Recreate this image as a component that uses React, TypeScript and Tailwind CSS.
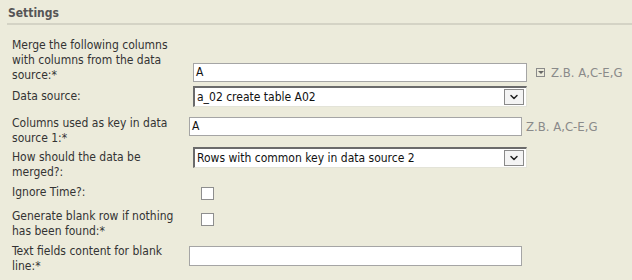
import { ChevronDown } from 'lucide-react';

function TextBox({ value, w, h = 'h-[19px]' }: { value?: string; w: string; h?: string }) {
  return (
    <div className={`${w} ${h} bg-white border border-[#a5a5a5] px-[2px] text-[12px] leading-[17px] text-[#111]`}>
      {value}
    </div>
  );
}

function Select({ value }: { value: string }) {
  return (
    <div className="w-[334px] h-[21px] flex items-stretch bg-white border-t-2 border-l-2 border-[#6b6b6b] border-b border-r border-b-[#e3e3d8] border-r-[#e3e3d8]">
      <div className="flex-1 px-[2px] text-[12px] leading-[18px] text-[#111]">{value}</div>
      <div className="w-[20px] my-[1px] mr-[2px] border border-[#8a8a8a] bg-[#f4f4f4] flex items-center justify-center">
        <ChevronDown className="w-[12px] h-[12px] text-[#222]" strokeWidth={3} />
      </div>
    </div>
  );
}

function Checkbox() {
  return <div className="w-[13px] h-[13px] bg-white border border-[#8e8e8e]" />;
}

function Hint({ children }: { children: string }) {
  return <span className="text-[13px] text-[#8a8a8a]">{children}</span>;
}

export default function App() {
  return (
    <div className="w-[632px] h-[280px] bg-[#ecebdb] text-[#333] overflow-hidden font-['DejaVu_Sans_Condensed','DejaVu_Sans',sans-serif]">
      <div className="pl-[8px] pt-[4px] h-[23px] text-[12px] font-bold text-[#555]">Settings</div>
      <div className="ml-[7px] h-[2px] bg-[#d4d3c5]" />

      <div className="pl-[12px] pt-[13px] text-[12px] leading-[15px]">
        {/* merge columns */}
        <div className="flex h-[48px]">
          <div className="w-[177px]">
            Merge the following columns<br />with columns from the data<br />source:*
          </div>
          <div className="flex items-center gap-[9px] pt-[25px] self-start">
            <div className="ml-[4px]"><TextBox value="A" w="w-[334px]" /></div>
            <div className="flex items-center gap-[6px]">
              <div className="w-[9px] h-[9px] border border-[#8a8a8a] flex items-center justify-center">
                <div className="w-0 h-0 border-l-[3px] border-r-[3px] border-t-[3px] border-l-transparent border-r-transparent border-t-[#666]" />
              </div>
              <Hint>Z.B. A,C-E,G</Hint>
            </div>
          </div>
        </div>

        {/* data source */}
        <div className="flex h-[30px]">
          <div className="w-[181px] pt-[3px]">Data source:</div>
          <div><Select value="a_02 create table A02" /></div>
        </div>

        {/* key columns */}
        <div className="flex h-[30px]">
          <div className="w-[177px]">Columns used as key in data<br />source 1:*</div>
          <div className="flex items-center gap-[4px] self-start pt-[1px]">
            <TextBox value="A" w="w-[333px]" />
            <Hint>Z.B. A,C-E,G</Hint>
          </div>
        </div>

        {/* how merged */}
        <div className="flex h-[37px]">
          <div className="w-[181px] pt-[4px]">How should the data be<br />merged?:</div>
          <div className="pt-[1px]"><Select value="Rows with common key in data source 2" /></div>
        </div>

        {/* ignore time */}
        <div className="flex h-[26px]">
          <div className="w-[189px] pt-[2px]">Ignore Time?:</div>
          <div className="pt-[4px]"><Checkbox /></div>
        </div>

        {/* blank row */}
        <div className="flex h-[35px]">
          <div className="w-[189px]">Generate blank row if nothing<br />has been found:*</div>
          <div className="pt-[4px]"><Checkbox /></div>
        </div>

        {/* blank line content */}
        <div className="flex">
          <div className="w-[177px]">Text fields content for blank<br />line:*</div>
          <div className="pt-[2px]"><TextBox w="w-[333px]" h="h-[20px]" /></div>
        </div>
      </div>
    </div>
  );
}
